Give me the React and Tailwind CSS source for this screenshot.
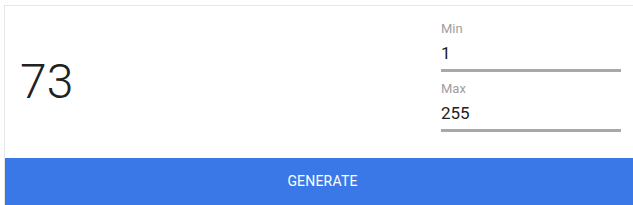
import React from 'react';

const Field = ({ label, value, className = '' }) => (
  <div className={`flex flex-col ${className}`}>
    <span className="text-[13px] leading-4 text-[#9e9e9e]">{label}</span>
    <span className="mt-1 pb-1 text-[17px] leading-6 text-[#212121] border-b-[3px] border-[#a8a8a8]">{value}</span>
  </div>
);

const App = () => {
  return (
    <div className="h-[205px] w-[633px] overflow-hidden bg-white font-['Roboto',sans-serif]">
      <div className="ml-[4px] mt-[5px] w-[636px] border-l border-t border-[#e6e6e6]">
        {/* Result and range */}
        <div className="flex h-[152px] items-center">
          <span className="pl-[15px] text-[48px] font-light leading-none text-[#212121]">73</span>
          <div className="ml-auto mr-[19px] flex w-[180px] flex-col self-start pt-[15px]">
            <Field label="Min" value="1" />
            <Field label="Max" value="255" className="mt-[9px]" />
          </div>
        </div>

        {/* Generate button */}
        <button className="flex h-[47px] w-full items-center justify-center bg-[#3b78e7] text-[14px] uppercase tracking-[0.2px] text-white">
          Generate
        </button>
      </div>
    </div>
  );
};

export default App;
